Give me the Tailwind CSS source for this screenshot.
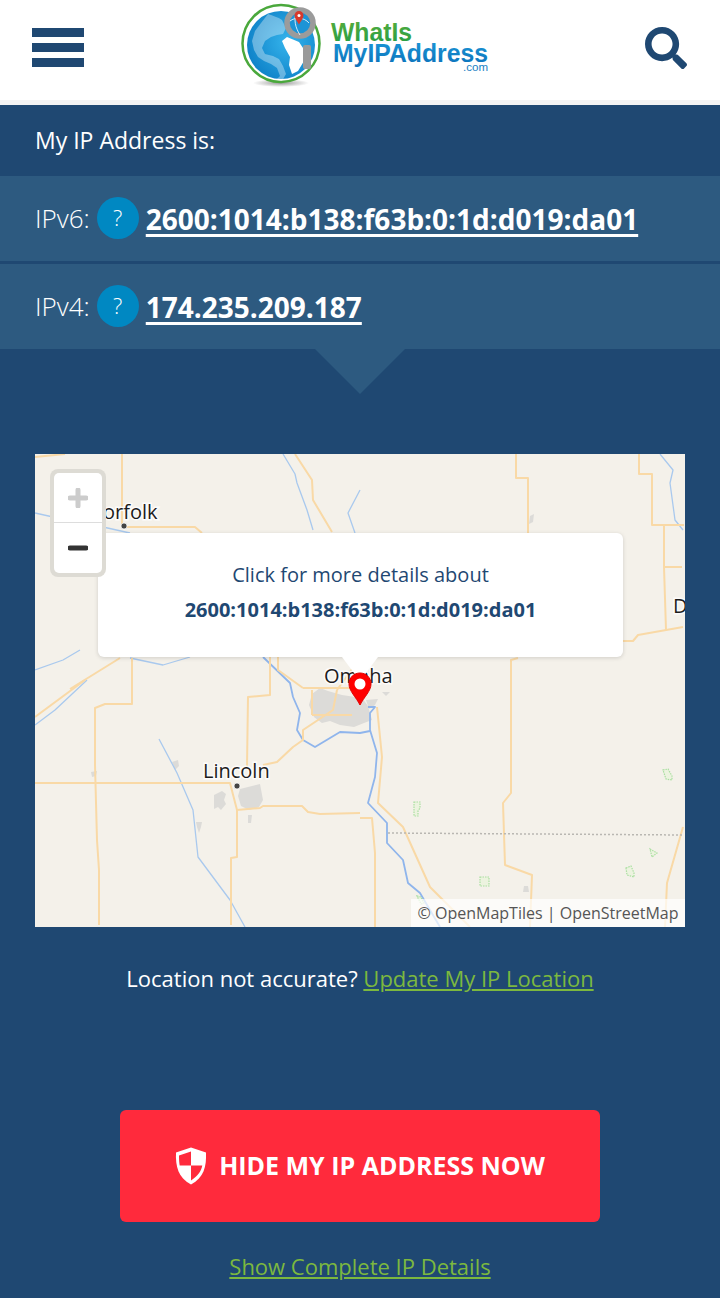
<!DOCTYPE html>
<html lang="en">
<head>
  <meta charset="UTF-8">
  <title>What Is My IP Address</title>
  <script src="https://cdn.jsdelivr.net/npm/@tailwindcss/browser@4"></script>
</head>
<body class="bg-[#1f4872] text-white font-['Open_Sans',sans-serif] h-[1298px] overflow-hidden">

  <!-- header -->
  <header class="bg-white h-[100px] pl-[32px] pr-[33px] flex items-center justify-between">
    <button class="w-[52px] flex flex-col gap-[6.5px] -mt-[5px]">
      <span class="block h-[8.5px] bg-[#1f4872]"></span>
      <span class="block h-[8.5px] bg-[#1f4872]"></span>
      <span class="block h-[8.5px] bg-[#1f4872]"></span>
    </button>
    <svg class="w-[250px] h-[90px] -mt-[9px] ml-[1px]" viewBox="236 0 250 90">
      <defs>
        <radialGradient id="globe" cx="0.6" cy="0.45" r="0.7">
          <stop offset="0" stop-color="#35b4ec"/>
          <stop offset="1" stop-color="#0a7cc4"/>
        </radialGradient>
        <linearGradient id="green" x1="0" y1="0" x2="0" y2="1">
          <stop offset="0" stop-color="#5cae3a"/>
          <stop offset="1" stop-color="#1f9c48"/>
        </linearGradient>
        <linearGradient id="blue" x1="0" y1="0" x2="0" y2="1">
          <stop offset="0" stop-color="#1c9ad9"/>
          <stop offset="1" stop-color="#0a6fb8"/>
        </linearGradient>
        <radialGradient id="shade"><stop offset="0" stop-color="#999"/><stop offset="1" stop-color="#fff"/></radialGradient>
      </defs>
      <ellipse cx="277" cy="82" rx="28" ry="4" fill="url(#shade)"/>
      <circle cx="277" cy="42.500" r="38.500" fill="#fff" stroke="#4aa83c" stroke-width="2.500"/>
      <circle cx="277" cy="44" r="34" fill="url(#globe)"/>
      <path d="M264 13c5 2 10 3 14 6l4 8-3 6-6 1-6 2-6 4-3 7 3 6 8 2 6 3 4 7 3 8-4 7-6-1 4-4-3-8-6-4-7-3-6-4-4-7-2-9 3-10 6-8z" fill="#fff" opacity=".35"/>
      <path d="M283 36l12 5 6 9-1 10-6 10-6 3-3-9 1-8-5-9-3-7z" fill="#fff"/>
      <circle cx="296" cy="22" r="13" fill="#1c94d6" stroke="#9b9b9b" stroke-width="5.500"/>
      <path d="M286 20c5-4 14-4 19 2M292 12c-2 7-1 14 4 22" fill="none" stroke="#fff" stroke-width=".8"/>
      <rect x="299" y="44" width="8" height="24" rx="2" fill="#9a9a9a"/>
      <path d="M295 10a4.500 4.500 0 0 1 4.500 4.500c0 3-3 6-4.500 9-1.500-3-4.500-6-4.500-9a4.500 4.500 0 0 1 4.500-4.500z" fill="#d8392b"/>
      <circle cx="295" cy="14.500" r="1.500" fill="#fff"/>
      <text x="327" y="40" textLength="81" lengthAdjust="spacingAndGlyphs" fill="url(#green)" class="font-['Liberation_Sans',sans-serif] font-bold text-[26px]">WhatIs</text>
      <text x="329" y="61" textLength="155" lengthAdjust="spacingAndGlyphs" fill="url(#blue)" class="font-['Liberation_Sans',sans-serif] font-bold text-[26px]">MyIPAddress</text>
      <text x="459" y="70" textLength="25" lengthAdjust="spacingAndGlyphs" fill="#1a7fc4" class="font-['Liberation_Sans',sans-serif] text-[10px]">.com</text>
    </svg>
    <svg class="w-[42px] h-[42px] -mt-[5px]" viewBox="0 0 512 512" fill="#1f4872">
      <path d="M505 442.700L405.300 343c-4.500-4.500-10.600-7-17-7H372c27.600-35.300 44-79.700 44-128C416 93.100 322.900 0 208 0S0 93.100 0 208s93.100 208 208 208c48.300 0 92.700-16.400 128-44v16.300c0 6.400 2.500 12.500 7 17l99.700 99.700c9.400 9.400 24.600 9.400 33.900 0l28.300-28.300c9.400-9.400 9.400-24.600.1-34zM208 336c-70.700 0-128-57.200-128-128 0-70.700 57.200-128 128-128 70.700 0 128 57.200 128 128 0 70.700-57.200 128-128 128z"/>
    </svg>
  </header>
  <div class="h-[5px] bg-[#f3f3f3]"></div>

  <!-- ip block -->
  <section>
    <h2 class="h-[71px] pl-[35px] flex items-center text-[23px] leading-none">My IP Address is:</h2>
    <div class="h-[85px] bg-[#2d5a80] pl-[35px] flex items-center">
      <span class="text-[26px] font-light">IPv6:</span>
      <span class="w-[42px] h-[42px] ml-[7px] -mt-[2px] rounded-full bg-[#0088c2] flex items-center justify-center text-[22px] font-light">?</span>
      <a href="#" class="ml-[7px] text-[28px] font-bold underline underline-offset-[4px] decoration-[2.500px]">2600:1014:b138:f63b:0:1d:d019:da01</a>
    </div>
    <div class="h-[85px] mt-[3px] bg-[#2d5a80] pl-[35px] flex items-center">
      <span class="text-[26px] font-light">IPv4:</span>
      <span class="w-[42px] h-[42px] ml-[7px] -mt-[2px] rounded-full bg-[#0088c2] flex items-center justify-center text-[22px] font-light">?</span>
      <a href="#" class="ml-[7px] text-[28px] font-bold underline underline-offset-[4px] decoration-[2.500px]">174.235.209.187</a>
    </div>
    <div class="w-0 h-0 mx-auto border-x-[45px] border-x-transparent border-t-[45px] border-t-[#2d5a80]"></div>
  </section>

  <!-- map -->
  <div class="relative mx-[35px] mt-[60px] h-[473px] bg-[#f4f1ea] overflow-hidden">
    <svg class="absolute inset-0 w-[650px] h-[473px]" viewBox="35 454 650 473" fill="none">
      <!-- towns -->
      <g fill="#dcdbd8">
        <path d="M312 694l8-6 8 3 14 4 20 3 6 8 4 14-8 3-10 4-14-2-10-4-8 2-8-6-5-12z"/>
        <path d="M240 789l20-5 3 16-4 7-10 3-8-4-3-10z"/>
        <path d="M214 795l8-4 4 3-2 6 2 4-5 6-3-3-4 2z"/>
        <path d="M172 762l6-2 1 6-4 4z"/>
        <path d="M91 772l6-1-1 5-4 1z"/>
        <path d="M196 822l6 0-1 5-2 6-2-6z"/>
        <path d="M248 815l4 0-1 8-3 0z"/>
        <path d="M530 516l4-2-1 8-4 2z"/>
        <path d="M366 700l12-1-3 6-6 4z"/>
        <path d="M382 692l8 0-4 4z"/>
        <path d="M524 886l4 0 1 6-6 0z"/>
      </g>
      <!-- rivers -->
      <g stroke="#a9c9ee" stroke-width="1.300" stroke-linejoin="round">
        <path d="M283 454l12 20 2 9 10 27 6 20"/>
        <path d="M360 490l-12 23 7 20"/>
        <path d="M35 513l18 4 50 10 27 6"/>
        <path d="M35 670l28-10 17-10"/>
        <path d="M130 658l33 7 27-8"/>
        <path d="M35 725l20-15 32-30"/>
        <path d="M159 739l18 34 16 37 5 47 32 43 15 27"/>
        <path d="M660 454l13 16-3 13 5 37 8 10"/>
      </g>
      <g stroke="#8fb5ec" stroke-width="1.800" stroke-linejoin="round">
        <path d="M293 697l7 16-3 17 6 10 12 7 25-15 20 1 10-2"/>
        <path d="M368 707h7l-5 6 0 17 7 23-2 24-7 26 19 20 0 20 16 17 5 23 12 10 20 34"/>
        <path d="M263 657l27 26 3 14"/>
      </g>
      <!-- roads -->
      <g stroke="#f9d9a6" stroke-width="2" stroke-linejoin="round">
        <path d="M35 457l30-3"/>
        <path d="M122 454v73h73l7 6"/>
        <path d="M295 454l17 26 1 20 19 32"/>
        <path d="M516 454v24h12v55"/>
        <path d="M639 454v20h13v51h32"/>
        <path d="M664 525v42l2 63M664 567h18"/>
        <path d="M623 641h10l5-6 45-8"/>
        <path d="M518 658l-7 2v133l-8 10 2 62 27 10-2 52"/>
        <path d="M70 689l50-31"/>
        <path d="M35 717l50-37"/>
        <path d="M132 658v46h-27l-10 4v57l2 75 2 30v55"/>
        <path d="M35 783h192l3 0 7 27v47l-6 1v67"/>
        <path d="M237 810l23-2 3-2h39l6 6 12 2 40-1"/>
        <path d="M247 767l1-70 22-2v-38"/>
        <path d="M263 765l14-3 16-15 10-7v-10l30-20 4-20"/>
        <path d="M278 657v13l25 18"/>
        <path d="M312 690v25M303 688h60M312 715h40"/>
        <path d="M355 665l-18 25"/>
        <path d="M377 707l5 50-4 46 25 24 27 60 40 40"/>
        <path d="M360 818l12 0 3 35v74"/>
        <path d="M683 827l-16 56-2 44"/>
      </g>
      <path d="M388 833l295 2" stroke="#b9b7b2" stroke-width="1.500" stroke-dasharray="2 2"/>
      <!-- parks -->
      <g stroke="#a9dfa0" stroke-width="1.200" stroke-dasharray="1.500 1" fill="#ecf3df">
        <path d="M414 802h6v6l-2 3v5h-4z"/>
        <path d="M663 770l5-1 4 7 0 4-6-1z"/>
        <path d="M650 849l7 4-5 4z"/>
        <path d="M626 868l5-2 3 7 0 4-7-2z"/>
        <path d="M480 877h9v9h-9z"/>
        <path d="M417 896l4 1 3 6-3 1z"/>
      </g>
      <!-- labels -->
      <g fill="#1c1c1c" stroke="#fff" stroke-opacity=".8" stroke-width="3" class="font-['Open_Sans',sans-serif] text-[20px] [paint-order:stroke]">
        <text x="88" y="519">Norfolk</text>
        <text x="324" y="683">Omaha</text>
        <text x="203" y="778">Lincoln</text>
        <text x="673" y="613">D</text>
      </g>
      <circle cx="124" cy="526" r="3" fill="#444" stroke="#fff" stroke-opacity=".7"/>
      <circle cx="237" cy="786" r="3" fill="#444" stroke="#fff" stroke-opacity=".7"/>
    </svg>

    <!-- popup -->
    <div class="absolute left-[63px] top-[79px] w-[525px] h-[124px] bg-white rounded-[6px] shadow-[0_1px_4px_rgba(0,0,0,0.15)] text-[#1f4872] text-center pt-[27px]">
      <p class="text-[20px] leading-[30px]">Click for more details about</p>
      <p class="text-[20px] leading-[30px] mt-[5px] font-bold">2600:1014:b138:f63b:0:1d:d019:da01</p>
      <div class="absolute left-[244px] top-full w-0 h-0 border-x-[18px] border-x-transparent border-t-[24px] border-t-white"></div>
    </div>

    <!-- pin -->
    <svg class="absolute left-[313px] top-[218px] w-[24px] h-[34px]" viewBox="0 0 24 34">
      <path d="M12 1C6 1 1 5.500 1 12c0 7 7 13 11 21 4-8 11-14 11-21 0-6.500-5-11-11-11z" fill="#f00" stroke="#e00000"/>
      <circle cx="12" cy="12" r="5.500" fill="#fff"/>
    </svg>

    <!-- zoom control -->
    <div class="absolute left-[15px] top-[15px] w-[56px] h-[108px] p-[4px] rounded-[8px] bg-[#dddbd4]">
      <div class="w-full h-full rounded-[5px] bg-white flex flex-col">
        <div class="h-[49px] flex items-center justify-center text-[#ccc]">
          <svg class="w-[20px] h-[20px]" viewBox="0 0 20 20"><path d="M10 2v16M2 10h16" stroke="currentColor" stroke-width="5" stroke-linecap="round"/></svg>
        </div>
        <div class="flex-1 border-t border-[#ddd] flex items-center justify-center text-[#333]">
          <svg class="w-[20px] h-[20px]" viewBox="0 0 20 20"><path d="M2 10h16" stroke="currentColor" stroke-width="5" stroke-linecap="round"/></svg>
        </div>
      </div>
    </div>

    <!-- attribution -->
    <div class="absolute right-0 bottom-0 h-[28px] w-[274px] bg-white/70 text-[#555] text-[16px] leading-[28px] text-center">© OpenMapTiles | OpenStreetMap</div>
  </div>

  <p class="mt-[34px] text-center text-[22px] leading-[34px]">Location not accurate? <a href="#" class="text-[#7cb83f] underline">Update My IP Location</a></p>

  <!-- cta -->
  <a href="#" class="mt-[115px] mx-auto w-[480px] h-[112px] rounded-[6px] bg-[#ff2a3c] flex items-center justify-center gap-[12px] font-bold text-[25px]">
    <svg class="w-[32px] h-[38px]" viewBox="0 0 32 38">
      <path d="M16 0.500L31 5.500c.5 14-2 25-15 32C3 30.500.5 19.500 1 5.500z" fill="#fff"/>
      <path d="M16 4.500L4 8.500c0 4 .2 7 .7 10H16zM16 18.500v15c7-4.500 10-9 11.300-15z" fill="#ff2a3c"/>
    </svg>
    HIDE MY IP ADDRESS NOW
  </a>

  <p class="mt-[27px] text-center text-[22px] leading-[34px]"><a href="#" class="text-[#7cb83f] underline">Show Complete IP Details</a></p>

</body>
</html>
